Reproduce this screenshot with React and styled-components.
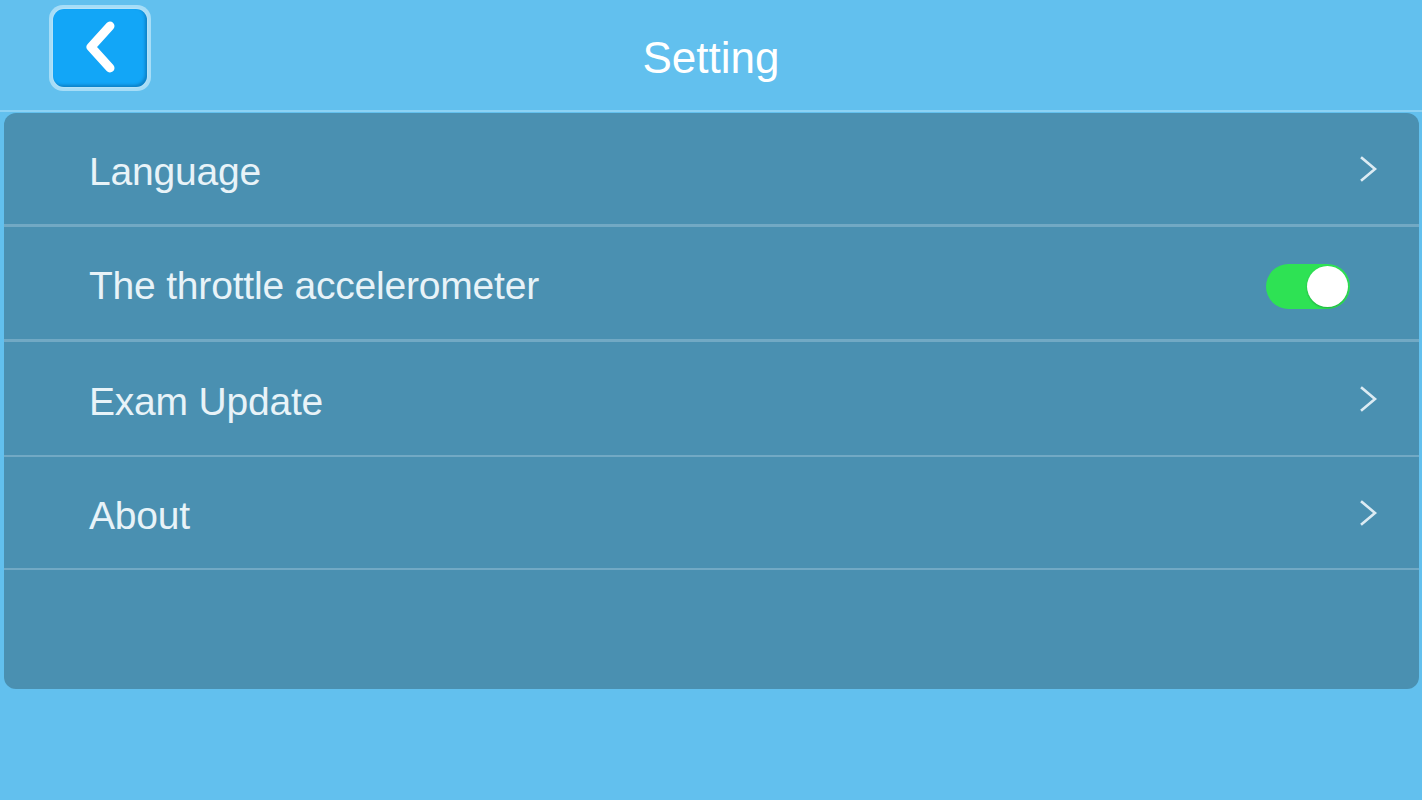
import React from 'react';
import styled, { createGlobalStyle } from 'styled-components';

const GlobalStyle = createGlobalStyle`
  html, body {
    margin: 0;
    padding: 0;
    background: #62c0ee;
  }
  body {
    font-family: 'Liberation Sans', Arial, sans-serif;
  }
`;

const Screen = styled.div`
  width: 1422px;
  height: 800px;
  background: #62c0ee;
  display: flex;
  flex-direction: column;
  overflow: hidden;
`;

const Header = styled.div`
  height: 112px;
  box-sizing: border-box;
  border-bottom: 2px solid #8cd2f4;
  display: flex;
  align-items: center;
  position: relative;
`;

const BackButton = styled.button`
  position: absolute;
  left: 49px;
  top: 5px;
  width: 102px;
  height: 86px;
  border-radius: 14px;
  border: none;
  padding: 4px;
  background: #a6ddf7;
  box-sizing: border-box;
  cursor: pointer;
`;

const BackInner = styled.div`
  width: 100%;
  height: 100%;
  border-radius: 11px;
  background: #12a6f7;
  box-shadow: inset -2px -2px 3px rgba(0, 60, 110, 0.35), 0 0 2px rgba(255,255,255,0.6);
  display: flex;
  align-items: center;
  justify-content: center;
`;

const Title = styled.h1`
  flex: 1;
  margin: 0;
  text-align: center;
  color: #ffffff;
  font-size: 44px;
  font-weight: normal;
  padding-top: 6px;
`;

const Panel = styled.div`
  margin: 1px 3px 0 4px;
  height: 576px;
  background: #4a90b1;
  border-radius: 12px;
  display: flex;
  flex-direction: column;
  overflow: hidden;
`;

const Row = styled.div`
  height: ${p => p.$h}px;
  flex-shrink: 0;
  box-sizing: border-box;
  display: flex;
  align-items: center;
  justify-content: space-between;
  padding: 6px 40px 0 85px;
  border-bottom: ${p => p.$line}px solid #72a9c4;
`;

const Label = styled.span`
  color: #e8f3f8;
  font-size: 39px;
  letter-spacing: -0.2px;
`;

const ArrowBox = styled.span`
  display: flex;
  margin-top: -6px;
`;

const Toggle = styled.div`
  width: 84px;
  height: 45px;
  border-radius: 23px;
  background: #2ee254;
  position: relative;
  margin-right: 29px;
`;

const Knob = styled.div`
  position: absolute;
  right: 2px;
  top: 2px;
  width: 41px;
  height: 41px;
  border-radius: 50%;
  background: #ffffff;
  box-shadow: 0 1px 2px rgba(0, 80, 20, 0.35);
`;

const Chevron = () => (
  <svg width="20" height="28" viewBox="0 0 20 28">
    <path d="M3 3 L16 14 L3 25" fill="none" stroke="#dcebf3" strokeWidth="2.6" strokeLinecap="square" strokeLinejoin="miter" />
  </svg>
);

const rows = [
  { label: 'Language', h: 114, line: 3, kind: 'arrow' },
  { label: 'The throttle accelerometer', h: 115, line: 3, kind: 'toggle' },
  { label: 'Exam Update', h: 115, line: 2, kind: 'arrow' },
  { label: 'About', h: 113, line: 2, kind: 'arrow' },
];

export default function App() {
  return (
    <Screen>
      <GlobalStyle />
      <Header>
        <BackButton aria-label="Back">
          <BackInner>
            <svg width="40" height="56" viewBox="0 0 40 56">
              <path d="M30 6 L11 27 L30 48" fill="none" stroke="#ffffff" strokeWidth="9" strokeLinecap="round" strokeLinejoin="round" />
            </svg>
          </BackInner>
        </BackButton>
        <Title>Setting</Title>
      </Header>
      <Panel>
        {rows.map(r => (
          <Row key={r.label} $h={r.h} $line={r.line}>
            <Label>{r.label}</Label>
            {r.kind === 'toggle' ? (
              <Toggle><Knob /></Toggle>
            ) : (
              <ArrowBox><Chevron /></ArrowBox>
            )}
          </Row>
        ))}
      </Panel>
    </Screen>
  );
}
